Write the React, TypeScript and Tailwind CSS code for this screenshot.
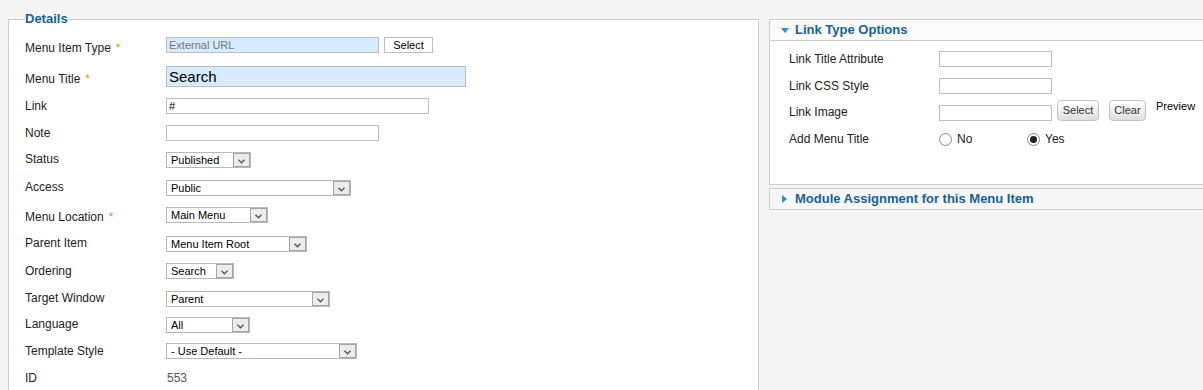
import type { ReactNode } from 'react'

function Chevron() {
  return (
    <svg width="7" height="5" viewBox="0 0 7 5" className="mt-[3px]">
      <path d="M0.5 0.8 L3.5 3.8 L6.5 0.8" fill="none" stroke="#555" strokeWidth="1.3" />
    </svg>
  )
}

function Select({ value, w }: { value: string; w: string }) {
  return (
    <div className={`flex h-4 border border-[#b8b8b8] bg-white ${w}`}>
      <span className="flex-1 pl-[4px] text-[11px] leading-[14px] text-black">{value}</span>
      <span className="flex w-[17px] items-center justify-center border border-[#a5a5a5] bg-[#ececec]">
        <Chevron />
      </span>
    </div>
  )
}

function Row({
  label,
  req,
  h,
  lt = '',
  children,
}: {
  label: string
  req?: boolean
  h: string
  lt?: string
  children: ReactNode
}) {
  return (
    <div className={`flex items-start ${h}`}>
      <label className={`w-[141px] shrink-0 text-[12px] leading-[14px] text-[#222] ${lt}`}>
        {label}
        {req && <span className="ml-[5px] text-[#f0883a]">*</span>}
      </label>
      <div className="flex items-start">{children}</div>
    </div>
  )
}

function RightRow({ label, lt = '', className = '', children }: { label: string; lt?: string; className?: string; children: ReactNode }) {
  return (
    <div className={`flex items-start ${className}`}>
      <label className={`w-[150px] shrink-0 text-[12px] leading-[14px] text-[#222] ${lt}`}>{label}</label>
      <div className="flex items-start">{children}</div>
    </div>
  )
}

function Radio({ label, checked }: { label: string; checked?: boolean }) {
  return (
    <div className="flex w-[88px] items-center">
      <span className="flex h-[13px] w-[13px] items-center justify-center rounded-full border border-[#8a8a8a] bg-white">
        {checked && <span className="h-[7px] w-[7px] rounded-full bg-[#222]" />}
      </span>
      <span className="ml-[5px] text-[12px] leading-[14px] text-[#222]">{label}</span>
    </div>
  )
}

export default function App() {
  return (
    <div className="flex h-[390px] w-[1203px] items-start overflow-hidden bg-[#f4f4f4] pl-2 font-['Liberation_Sans',Arial,sans-serif]">
      <fieldset className="mt-[11px] h-[400px] w-[751px] shrink-0 border border-[#cccccc] bg-white px-4 pt-[10px]">
        <legend className="text-[13px] font-bold leading-4 text-[#146295]">Details</legend>

        <Row label="Menu Item Type" req h="h-[29px]" lt="mt-[4px]">
          <div className="h-4 w-[213px] border border-[#bdbdbd] bg-[#d6ebff] pl-[2px] text-[11px] leading-[14px] text-[#777]">External URL</div>
          <button className="ml-[5px] h-4 w-[49px] border border-[#bdbdbd] bg-white text-[11px] leading-[14px] text-black">Select</button>
        </Row>
        <Row label="Menu Title" req h="h-[32px]" lt="mt-[6px]">
          <div className="h-[21px] w-[300px] border border-[#bdbdbd] bg-[#d6ebff] pl-[2px] text-[15px] leading-[19px] text-black">Search</div>
        </Row>
        <Row label="Link" h="h-[27px]" lt="mt-px">
          <div className="h-4 w-[263px] border border-[#bdbdbd] bg-white pl-[2px] text-[11px] leading-[14px] text-black">#</div>
        </Row>
        <Row label="Note" h="h-[27px]" lt="mt-px">
          <div className="h-4 w-[213px] border border-[#bdbdbd] bg-white" />
        </Row>
        <Row label="Status" h="h-[28px]">
          <Select value="Published" w="w-[85px]" />
        </Row>
        <Row label="Access" h="h-[27px]">
          <Select value="Public" w="w-[185px]" />
        </Row>
        <Row label="Menu Location" req h="h-[29px]" lt="mt-[3px]">
          <Select value="Main Menu" w="w-[102px]" />
        </Row>
        <Row label="Parent Item" h="h-[27px]">
          <Select value="Menu Item Root" w="w-[141px]" />
        </Row>
        <Row label="Ordering" h="h-[28px]" lt="mt-px">
          <Select value="Search" w="w-[68px]" />
        </Row>
        <Row label="Target Window" h="h-[26px]">
          <Select value="Parent" w="w-[164px]" />
        </Row>
        <Row label="Language" h="h-[26px]">
          <Select value="All" w="w-[84px]" />
        </Row>
        <Row label="Template Style" h="h-[28px]" lt="mt-px">
          <Select value="- Use Default -" w="w-[191px]" />
        </Row>
        <Row label="ID" h="h-[27px]">
          <span className="pl-px text-[12px] leading-[14px] text-[#555]">553</span>
        </Row>
      </fieldset>

      <div className="-mr-4 ml-[10px] mt-[19px] flex flex-1 flex-col">
        <div className="border border-[#cccccc] bg-white">
          <div className="flex h-[21px] items-center border-b border-[#cccccc] bg-[#fafafa] pl-[11px]">
            <svg width="8" height="5" viewBox="0 0 8 5">
              <path d="M0 0 H8 L4 5 Z" fill="#2f8fd0" />
            </svg>
            <span className="ml-[6px] text-[13px] font-bold leading-4 text-[#146295]">Link Type Options</span>
          </div>
          <div className="h-[143px] pl-[19px] pt-[10px]">
            <RightRow label="Link Title Attribute" lt="mt-px" className="mb-[11px]">
              <div className="h-4 w-[113px] border border-[#bdbdbd] bg-white" />
            </RightRow>
            <RightRow label="Link CSS Style" lt="mt-px" className="mb-[6px]">
              <div className="h-4 w-[113px] border border-[#bdbdbd] bg-white" />
            </RightRow>
            <RightRow label="Link Image" lt="mt-[5px]" className="mb-[11px]">
              <div className="mt-[5px] h-4 w-[113px] border border-[#bdbdbd] bg-white" />
              <button className="ml-[5px] h-[21px] w-[42px] rounded-[4px] border border-[#c4c4c4] bg-gradient-to-b from-white to-[#dedede] text-[11px] text-[#333]">Select</button>
              <button className="ml-[10px] h-[21px] w-[37px] rounded-[4px] border border-[#c4c4c4] bg-gradient-to-b from-white to-[#dedede] text-[11px] text-[#333]">Clear</button>
              <span className="ml-[10px] text-[11px] leading-[13px] text-black">Preview</span>
            </RightRow>
            <RightRow label="Add Menu Title">
              <Radio label="No" />
              <Radio label="Yes" checked />
            </RightRow>
          </div>
        </div>

        <div className="mt-[3px] flex h-[22px] items-center border border-[#cccccc] bg-[#f7f7f7] pl-[12px]">
          <svg width="5" height="8" viewBox="0 0 5 8">
            <path d="M0 0 L5 4 L0 8 Z" fill="#2f8fd0" />
          </svg>
          <span className="ml-[8px] text-[13px] font-bold leading-4 text-[#146295]">Module Assignment for this Menu Item</span>
        </div>
      </div>
    </div>
  )
}
